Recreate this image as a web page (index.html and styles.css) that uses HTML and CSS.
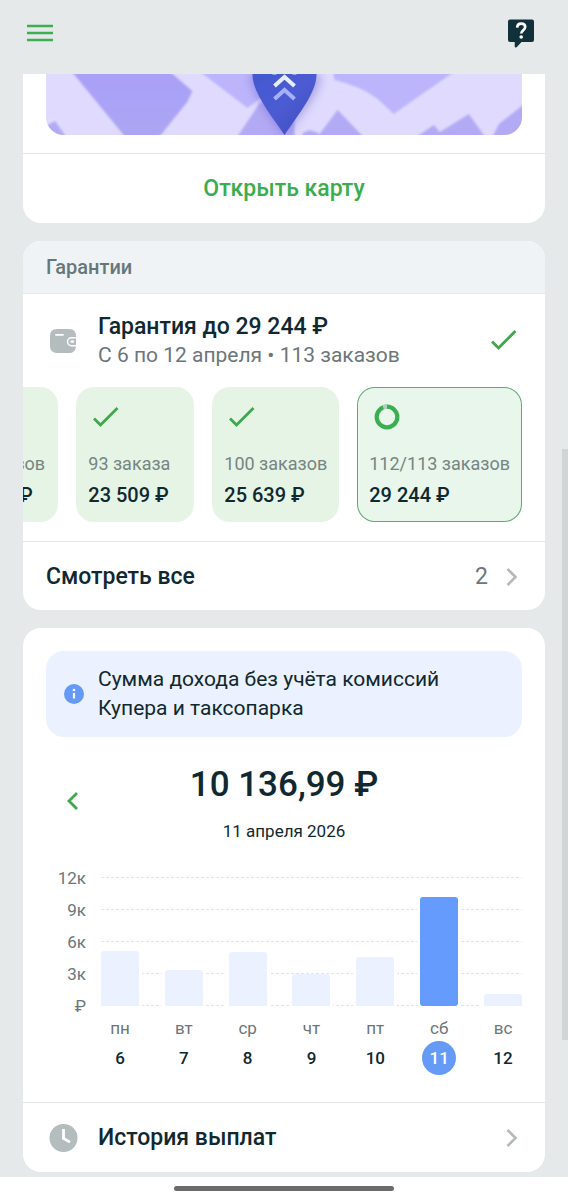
FILE: index.html
```html
<!DOCTYPE html>
<html lang="ru">
<head>
<meta charset="utf-8">
<meta name="viewport" content="width=device-width, initial-scale=1">
<title>Доход</title>
<link rel="stylesheet" href="styles.css">
</head>
<body>
<div class="app">
  <header class="topbar">
    <button class="icon-button" type="button" aria-label="Меню">
      <svg width="28" height="30" viewBox="0 0 28 30"><path d="M1 8h26M1 15h26M1 22h26" stroke="#3fae52" stroke-width="2.6" fill="none"/></svg>
    </button>
    <button class="icon-button" type="button" aria-label="Помощь">
      <svg width="28" height="30" viewBox="0 0 28 30"><path d="M3 1.500h22a2 2 0 0 1 2 2v18.500a2 2 0 0 1-2 2H14.500l-4.600 5c-.8.9-2.200.4-2.200-.8V24H3a2 2 0 0 1-2-2V3.500a2 2 0 0 1 2-2z" fill="#10303a"/><path d="M10.200 9.600c.1-2.600 1.700-3.900 4-3.900 2.500 0 4 1.400 4 3.400 0 3.100-4 3.100-4 6.400" fill="none" stroke="#fff" stroke-width="2.700"/><circle cx="14.200" cy="19" r="1.800" fill="#fff"/></svg>
    </button>
  </header>

  <main class="feed">
    <section class="card card-map">
      <div class="map-wrap">
        <svg class="map" viewBox="0 0 475 61" preserveAspectRatio="xMidYMid slice" aria-hidden="true">
          <defs>
            <linearGradient id="pin" x1="0" y1="0" x2="1" y2="1"><stop offset="0" stop-color="#4259d0"/><stop offset=".5" stop-color="#4c5bd2"/><stop offset="1" stop-color="#3c4cb8"/></linearGradient>
            <linearGradient id="block" x1="0" y1="0" x2="0" y2="1"><stop offset="0" stop-color="#a9a0f8"/><stop offset="1" stop-color="#aca6f3"/></linearGradient>
            <filter id="soft" x="-10%" y="-10%" width="120%" height="120%"><feGaussianBlur stdDeviation=".8"/></filter>
            <filter id="shade" x="-50%" y="-50%" width="200%" height="200%"><feGaussianBlur stdDeviation="5"/></filter>
          </defs>
          <rect width="475" height="61" fill="#dfdafe"/>
          <g filter="url(#soft)">
            <path d="M26-2H124L146 17 141 28 112 64H80Z" fill="url(#block)"/>
            <path d="M154-2 201 34 222 18V-2ZM286-2 288 6Q314 12 331 25L347 40 364 28 407-2Z" fill="#bdb5fc"/>
            <path d="M214 28 190 64H248V40ZM291 36 270 64H318ZM368 64 387 51 393 58 422 40 439 64ZM445 64 452 50 480 28V64ZM-2 53 9 47 21 64H-2ZM256 59 263 56 272 59V64H256Z" fill="#b3aaf5"/>
          </g>
          <path d="M204 0C204 20 224 42 238 63 252 42 274 20 274 0Z" fill="#6f66cf" opacity=".5" filter="url(#shade)"/>
          <path d="M206 0C206 19 224 40 238 61 252 40 270 19 270 0Z" fill="url(#pin)"/>
          <path d="M228-3V.5M248-3V.5M228 12 238 3 248 12" fill="none" stroke="#e8edff" stroke-width="4"/>
          <path d="M228 25 238 16 248 25" fill="none" stroke="#a5b0f7" stroke-width="4"/>
        </svg>
      </div>
      <button class="map-open" type="button">Открыть карту</button>
    </section>

    <section class="card">
      <h2 class="card-head">Гарантии</h2>
      <div class="goal">
        <svg class="lead-icon" width="34" height="34" viewBox="0 0 34 34" aria-hidden="true"><path d="M11 5h12q7 0 7 7v1h-4.500a4.700 4.700 0 0 0 0 9.400H30q-.4 6.600-7 6.600H11q-7 0-7-7v-10q0-7 7-7z" fill="#b4bcbd"/><path d="M10 10.800h7" stroke="#fff" stroke-width="1.800" stroke-linecap="round"/><path d="M30 14.500h-4.500a3.200 3.200 0 0 0 0 6.400H30z" fill="#b4bcbd"/><path d="M25.500 17.700h1.600" stroke="#fff" stroke-width="2.200" stroke-linecap="round"/></svg>
        <div class="goal-text">
          <h3 class="goal-title">Гарантия до 29 244 ₽</h3>
          <p class="goal-sub">С 6 по 12 апреля • 113 заказов</p>
        </div>
        <svg width="36" height="28" viewBox="0 0 36 28" aria-hidden="true"><path d="M6 14.500 12.500 21 29.500 4" fill="none" stroke="#3fa84d" stroke-width="2.800"/></svg>
      </div>
      <ul class="steps">
        <li class="step">
          <svg class="step-icon" width="36" height="28" viewBox="0 0 36 28" aria-hidden="true"><path d="M6 15.500 12.500 22 29.500 5" fill="none" stroke="#3fa84d" stroke-width="2.800"/></svg>
          <span class="step-count">87 заказов</span><strong class="step-sum">21 374 ₽</strong>
        </li>
        <li class="step">
          <svg class="step-icon" width="36" height="28" viewBox="0 0 36 28" aria-hidden="true"><path d="M6 15.500 12.500 22 29.500 5" fill="none" stroke="#3fa84d" stroke-width="2.800"/></svg>
          <span class="step-count">93 заказа</span><strong class="step-sum">23 509 ₽</strong>
        </li>
        <li class="step">
          <svg class="step-icon" width="36" height="28" viewBox="0 0 36 28" aria-hidden="true"><path d="M6 15.500 12.500 22 29.500 5" fill="none" stroke="#3fa84d" stroke-width="2.800"/></svg>
          <span class="step-count">100 заказов</span><strong class="step-sum">25 639 ₽</strong>
        </li>
        <li class="step step-current">
          <svg class="step-icon" width="36" height="28" viewBox="0 0 36 28" aria-hidden="true"><circle cx="18" cy="14" r="10.300" fill="none" stroke="#3bae51" stroke-width="4.200"/><path d="M14.200 4.400A10.300 10.300 0 0 1 18 3.700" fill="none" stroke="#b7cdbd" stroke-width="4.200"/></svg>
          <span class="step-count">112/113 заказов</span><strong class="step-sum">29 244 ₽</strong>
        </li>
      </ul>
      <a class="row" href="#all">
        <span class="row-title">Смотреть все</span>
        <span class="row-value">2</span>
        <svg width="20" height="24" viewBox="0 0 20 24" aria-hidden="true"><path d="M5.500 4 13.500 12 5.500 20" fill="none" stroke="#b3b9bb" stroke-width="2.600"/></svg>
      </a>
    </section>

    <section class="card">
      <div class="income">
        <div class="note">
          <svg width="20" height="20" viewBox="0 0 20 20" aria-hidden="true"><circle cx="10" cy="10" r="10" fill="#659af4"/><path d="M10 9v5.500" stroke="#fff" stroke-width="2.200"/><circle cx="10" cy="6" r="1.300" fill="#fff"/></svg>
          <p>Сумма дохода без учёта комиссий Купера и таксопарка</p>
        </div>
        <div class="period">
          <button class="period-prev" type="button" aria-label="Предыдущий день">
            <svg width="20" height="24" viewBox="0 0 20 24"><path d="M14 4 6 12 14 20" fill="none" stroke="#3fa84d" stroke-width="2.800"/></svg>
          </button>
          <div class="period-main">
            <p class="period-sum">10 136,99 ₽</p>
            <p class="period-date">11 апреля 2026</p>
          </div>
        </div>
        <div class="chart">
          <div class="axis"><span>12к</span><span>9к</span><span>6к</span><span>3к</span><span>₽</span></div>
          <div class="plot">
            <div class="bar" style="height:55px"></div>
            <div class="bar" style="height:36px"></div>
            <div class="bar" style="height:54px"></div>
            <div class="bar" style="height:32px"></div>
            <div class="bar" style="height:49px"></div>
            <div class="bar bar-active" style="height:109px"></div>
            <div class="bar" style="height:12px"></div>
          </div>
          <div class="days">
            <button class="day" type="button">пн<span class="date">6</span></button>
            <button class="day" type="button">вт<span class="date">7</span></button>
            <button class="day" type="button">ср<span class="date">8</span></button>
            <button class="day" type="button">чт<span class="date">9</span></button>
            <button class="day" type="button">пт<span class="date">10</span></button>
            <button class="day" type="button">сб<span class="date date-active">11</span></button>
            <button class="day" type="button">вс<span class="date">12</span></button>
          </div>
        </div>
      </div>
      <a class="row" href="#history">
        <svg class="lead-icon" width="34" height="34" viewBox="0 0 34 34" aria-hidden="true"><circle cx="17.500" cy="17" r="14" fill="#b4bcbd"/><path d="M17.500 8v9.500l6.500 3.600" fill="none" stroke="#fff" stroke-width="2.800"/></svg>
        <span class="row-title">История выплат</span>
        <svg width="20" height="24" viewBox="0 0 20 24" aria-hidden="true"><path d="M5.500 4 13.500 12 5.500 20" fill="none" stroke="#b3b9bb" stroke-width="2.600"/></svg>
      </a>
    </section>
  </main>

  <footer class="homebar"><span class="homebar-pill"></span></footer>
  <div class="scroll-thumb"></div>
</div>
</body>
</html>
```

FILE: styles.css
```css
* { box-sizing: border-box; }
body {
  margin: 0;
  background: #e5e9ea;
  color: #10282f;
  font-family: Roboto, "Noto Sans", sans-serif;
  font-size: 20px;
  line-height: 28px;
}
h2, h3, p, ul { margin: 0; padding: 0; }
button { border: 0; padding: 0; background: none; font: inherit; color: inherit; cursor: pointer; }
a { color: inherit; text-decoration: none; }
svg { display: block; flex: none; }

.app { position: relative; min-height: 100vh; display: flex; flex-direction: column; }
.topbar { display: flex; justify-content: space-between; align-items: center; padding: 18px 33px 26px 26px; }
.feed { display: flex; flex-direction: column; gap: 18px; padding: 0 23px; flex: 1; }

.card { background: #fff; border-radius: 18px; overflow: hidden; }
.card-map { border-top-left-radius: 0; border-top-right-radius: 0; }
.map-wrap { padding: 0 23px 18px; }
.map { width: 100%; height: 61px; border-radius: 0 0 18px 18px; }
.map-open {
  width: 100%; padding: 21px 23px 20px; border-top: 1px solid #e3e6e7;
  color: #3bad4d; font-size: 23px; font-weight: 500; line-height: 28px;
}

.card-head {
  padding: 12px 23px; background: #eff3f5; border-bottom: 1px solid #e5e9ea;
  color: #66777a; font-size: 20px; font-weight: 500; line-height: 28px;
}
.goal { display: flex; align-items: center; padding: 18px 23px; }
.lead-icon { margin-right: 18px; }
.goal-text { flex: 1; }
.goal-title { font-size: 23px; font-weight: 500; line-height: 29px; }
.goal-sub { color: #6c7679; font-size: 21px; line-height: 28px; }

.steps { display: flex; justify-content: flex-end; gap: 18px; padding: 0 23px 19px; overflow: hidden; list-style: none; }
.step {
  flex: none; min-width: 118px; padding: 16px 12px 10px; border-radius: 18px;
  display: flex; flex-direction: column; background: #e6f4e6;
}
.step-current { background: #e8f6ec; box-shadow: inset 0 0 0 1px #5fab72; }
.step-icon { margin-bottom: 18px; }
.step-count { color: #768582; font-size: 18px; line-height: 30px; }
.step-sum { font-size: 20px; font-weight: 500; line-height: 33px; }

.row { display: flex; align-items: center; padding: 18px 23px 17px; border-top: 1px solid #e3e6e7; min-height: 69px; }
.row-title { flex: 1; font-size: 23px; font-weight: 500; line-height: 28px; }
.row-value { margin-right: 14px; color: #6c7679; font-size: 23px; }

.income { padding: 23px 23px 27px; }
.note { display: flex; align-items: center; gap: 14px; padding: 14px 18px; border-radius: 18px; background: #ebf1fe; }
.note p { max-width: 360px; font-size: 21px; line-height: 29px; }
.period { display: grid; grid-template-columns: 54px 1fr 54px; align-items: start; padding-top: 25px; }
.period-prev { justify-self: center; padding-top: 27px; }
.period-main { text-align: center; }
.period-sum { font-size: 35px; font-weight: 500; line-height: 46px; }
.period-date { font-size: 17px; line-height: 46px; }

.chart { display: grid; grid-template-columns: 40px 1fr; column-gap: 15px; padding-top: 23px; color: #6c7679; font-size: 17px; }
.axis { display: flex; flex-direction: column; justify-content: space-between; text-align: right; line-height: 20px; margin: -9px 0 -10px; }
.plot {
  display: flex; align-items: flex-end; justify-content: space-between; height: 129px;
  background:
    repeating-linear-gradient(to bottom, transparent 0 1px, #fff 1px 32px),
    repeating-linear-gradient(to right, #e2e4e5 0 3px, #fff 3px 5px);
}
.bar { width: 38px; border-radius: 3px 3px 0 0; background: #ebf1fe; box-shadow: -3px 0 #fff, 3px 0 #fff; }
.bar-active { border-radius: 3px; background: #659bfc; }
.days { grid-column: 2; display: flex; justify-content: space-between; padding-top: 10px; }
.day { width: 38px; display: flex; flex-direction: column; align-items: center; line-height: 25px; }
.date { width: 34px; height: 34px; border-radius: 50%; color: #10282f; font-weight: 500; line-height: 34px; text-align: center; }
.date-active { background: #659bf6; color: #fff; }

.homebar { display: flex; justify-content: center; margin-top: 5px; padding: 9px 0; background: #fff; }
.homebar-pill { width: 220px; height: 5px; border-radius: 3px; background: #6b6b6b; }
.scroll-thumb { position: absolute; right: 0; top: 449px; width: 6px; height: 591px; background: #d1d5d6; }
```
